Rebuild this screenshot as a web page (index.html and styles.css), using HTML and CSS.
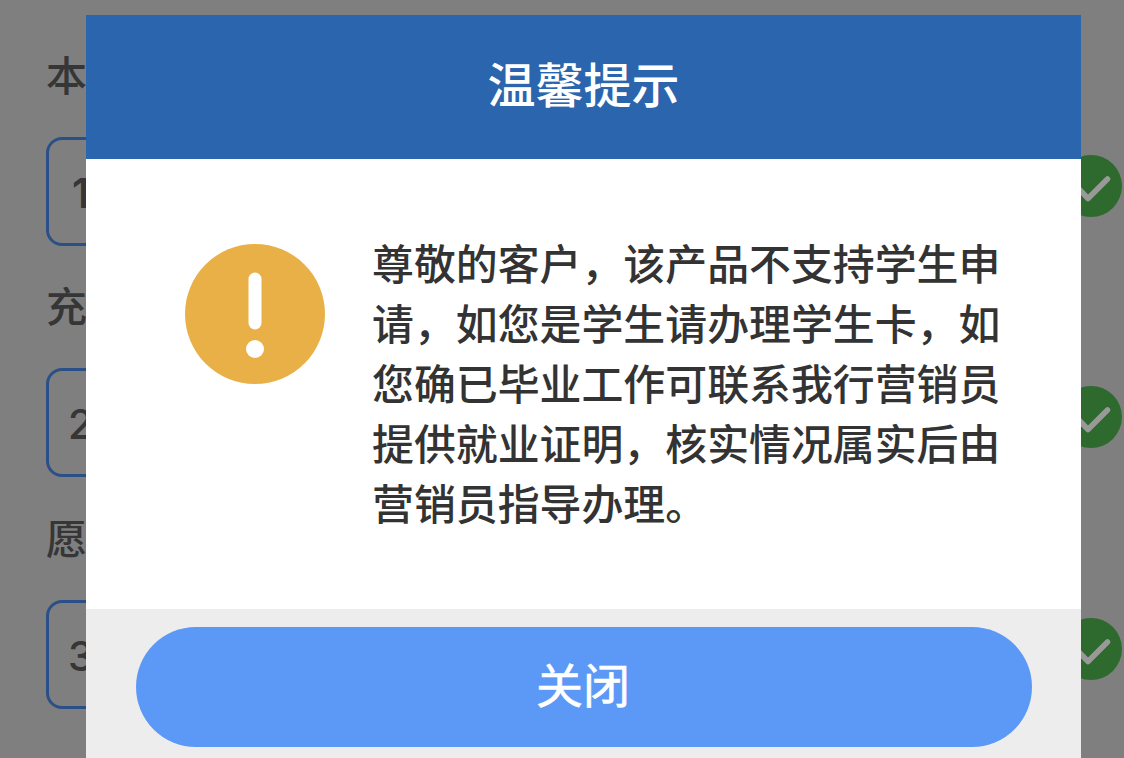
FILE: index.html
```html
<!DOCTYPE html>
<html lang="zh-CN">
<head>
    <meta charset="UTF-8">
    <meta name="viewport" content="width=device-width, initial-scale=1.0">
    <title>温馨提示</title>
    <link rel="stylesheet" href="styles.css">
</head>
<body>
    <form class="form">
        <div class="form-item">
            <div class="label">本</div>
            <div class="row">
                <div class="input bold">1</div>
                <svg class="check" viewBox="0 0 62 62">
                    <circle cx="31" cy="31" r="31"/>
                    <path d="M16 31L28 43.5L47.5 24"/>
                </svg>
            </div>
        </div>
        <div class="form-item">
            <div class="label">充</div>
            <div class="row">
                <div class="input">2</div>
                <svg class="check" viewBox="0 0 62 62">
                    <circle cx="31" cy="31" r="31"/>
                    <path d="M16 31L28 43.5L47.5 24"/>
                </svg>
            </div>
        </div>
        <div class="form-item">
            <div class="label">愿</div>
            <div class="row">
                <div class="input">3</div>
                <svg class="check" viewBox="0 0 62 62">
                    <circle cx="31" cy="31" r="31"/>
                    <path d="M16 31L28 43.5L47.5 24"/>
                </svg>
            </div>
        </div>
    </form>

    <!-- 提示弹窗 -->
    <div class="modal-overlay">
        <div class="modal">
            <div class="modal-header">温馨提示</div>
            <div class="modal-body">
                <svg class="warn" viewBox="0 0 140 140">
                    <circle cx="70" cy="70" r="70" fill="#eab048"/>
                    <rect x="63.5" y="28.5" width="13" height="57" rx="6.5" fill="#fff"/>
                    <circle cx="70" cy="105" r="9" fill="#fff"/>
                </svg>
                <p class="message">尊敬的客户，该产品不支持学生申请，如您是学生请办理学生卡，如您确已毕业工作可联系我行营销员提供就业证明，核实情况属实后由营销员指导办理。</p>
            </div>
            <div class="modal-footer">
                <button class="btn">关闭</button>
            </div>
        </div>
    </div>
</body>
</html>
```

FILE: styles.css
```css
* {
    box-sizing: border-box;
}
body {
    margin: 0;
    height: 758px;
    overflow: hidden;
    background-color: #d4d4d4;
    font-family: "Noto Sans CJK SC", sans-serif;
    font-weight: 500;
}
.form {
    padding: 42px 2px 0 46px;
}
.form-item {
    height: 231.4px;
}
.label {
    height: 95px;
    line-height: 62px;
    font-size: 41px;
    color: #5a5a5a;
}
.row {
    display: flex;
    align-items: flex-start;
    gap: 20px;
}
.input {
    flex: 1;
    height: 109px;
    padding-left: 19px;
    border: 3px solid #4985e3;
    border-radius: 16px;
    font-family: Inter, sans-serif;
    font-size: 41px;
    font-weight: 500;
    line-height: 107px;
    color: #5a5a5a;
}
.input.bold {
    padding-left: 23px;
    font-weight: 600;
}
.check {
    width: 62px;
    height: 62px;
    margin-top: 18px;
}
.check circle {
    fill: #4eaf4e;
}
.check path {
    fill: none;
    stroke: #fff;
    stroke-width: 5.5;
    stroke-linecap: round;
    stroke-linejoin: round;
}
.modal-overlay {
    position: fixed;
    top: 0;
    left: 0;
    width: 100%;
    height: 100%;
    padding: 15px 43px 0 86px;
    background-color: rgba(0, 0, 0, 0.4);
}
.modal {
    background-color: #fff;
}
.modal-header {
    height: 144px;
    line-height: 134px;
    background-color: #2a65ad;
    color: #fff;
    font-size: 48px;
    text-align: center;
}
.modal-body {
    display: flex;
    align-items: flex-start;
    height: 450px;
    padding: 73px 78px 0 98.5px;
}
.warn {
    flex: none;
    width: 140px;
    height: 140px;
    margin: 12px 47.5px 0 0;
}
.message {
    flex: 1;
    margin: 0;
    font-size: 41.9px;
    line-height: 60px;
    color: #333;
}
.modal-footer {
    height: 149px;
    padding: 18px 49px 0 50px;
    background-color: #ededed;
}
.btn {
    display: block;
    width: 100%;
    height: 120px;
    padding: 0 2px 10px 0;
    border: none;
    border-radius: 60px;
    background-color: #5c99f7;
    color: #fff;
    font-family: inherit;
    font-size: 47px;
    font-weight: 400;
    -webkit-text-stroke: 0.6px #fff;
    cursor: pointer;
}
```
